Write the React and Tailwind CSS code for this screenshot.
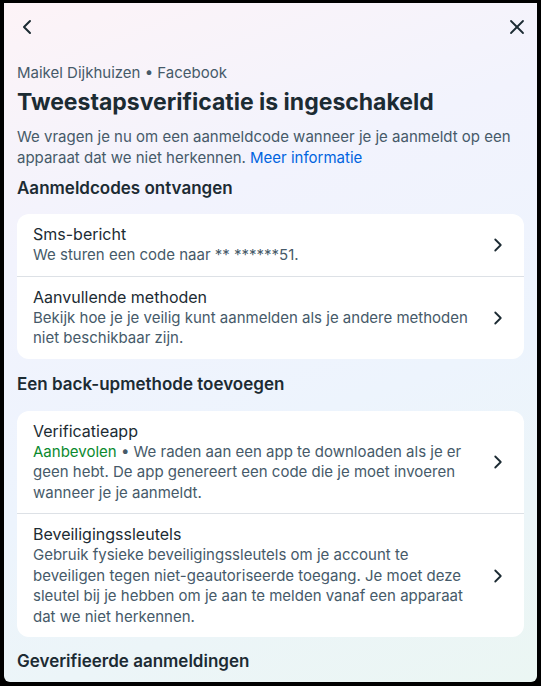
import { ChevronLeft, ChevronRight, X } from 'lucide-react'

const font = { fontFamily: 'Inter, "Noto Sans", sans-serif' }

function Row({ title, children, last }) {
    return (
        <div className={`flex items-center pl-4 pr-[15px] ${last ? '' : 'border-b border-[#dde1e6]'}`}>
            <div className="flex-1 py-[10px] pr-4">
                <div className="text-[16px] leading-[21px] text-[#1c2b33]">{title}</div>
                <div className="text-[15px] leading-[20.5px] text-[#465a69]">{children}</div>
            </div>
            <ChevronRight size={22} strokeWidth={2} className="text-[#1c2b33] shrink-0" />
        </div>
    )
}

export default function App() {
    return (
        <div className="w-[541px] h-[686px] bg-black p-[4px] pt-[3px]" style={font}>
            <div className="h-full rounded-b-[6px] overflow-hidden bg-[linear-gradient(160deg,#fdf3f7_0%,#f2f3fd_30%,#edf4fd_60%,#ebf6f3_100%)] px-[13px]">
                <div className="flex justify-between items-center h-[46px] pt-[2px]">
                    <ChevronLeft size={24} strokeWidth={2} className="text-[#1c2b33] -ml-[2px]" />
                    <X size={24} strokeWidth={1.8} className="text-[#1c2b33] mr-[-5px]" />
                </div>
                <div className="mt-[14px] text-[15px] leading-[20px] text-[#465a69]">Maikel Dijkhuizen • Facebook</div>
                <h1 className="mt-[5px] text-[23px] leading-[29px] font-bold text-[#1c2b33]">Tweestapsverificatie is ingeschakeld</h1>
                <p className="mt-[9px] text-[15px] leading-[21px] text-[#465a69]">
                    We vragen je nu om een aanmeldcode wanneer je je aanmeldt op een apparaat dat we niet herkennen.{' '}
                    <span className="text-[#0064e0]">Meer informatie</span>
                </p>
                <h2 className="mt-[9px] text-[17px] leading-[22px] font-semibold text-[#1c2b33]">Aanmeldcodes ontvangen</h2>
                <div className="mt-[15px] bg-white rounded-[12px]">
                    <Row title="Sms-bericht">We sturen een code naar ** ******51.</Row>
                    <Row title="Aanvullende methoden" last>
                        Bekijk hoe je je veilig kunt aanmelden als je andere methoden niet beschikbaar zijn.
                    </Row>
                </div>
                <h2 className="mt-[14px] text-[17px] leading-[22px] font-semibold text-[#1c2b33]">Een back-upmethode toevoegen</h2>
                <div className="mt-[16px] bg-white rounded-[12px]">
                    <Row title="Verificatieapp">
                        <span className="text-[#0a8a2e]">Aanbevolen</span> • We raden aan een app te downloaden als je er geen hebt. De app genereert een code die je moet invoeren wanneer je je aanmeldt.
                    </Row>
                    <Row title="Beveiligingssleutels" last>
                        Gebruik fysieke beveiligingssleutels om je account te beveiligen tegen niet-geautoriseerde toegang. Je moet deze sleutel bij je hebben om je aan te melden vanaf een apparaat dat we niet herkennen.
                    </Row>
                </div>
                <h2 className="mt-[13px] text-[17px] leading-[22px] font-semibold text-[#1c2b33]">Geverifieerde aanmeldingen</h2>
            </div>
        </div>
    )
}
